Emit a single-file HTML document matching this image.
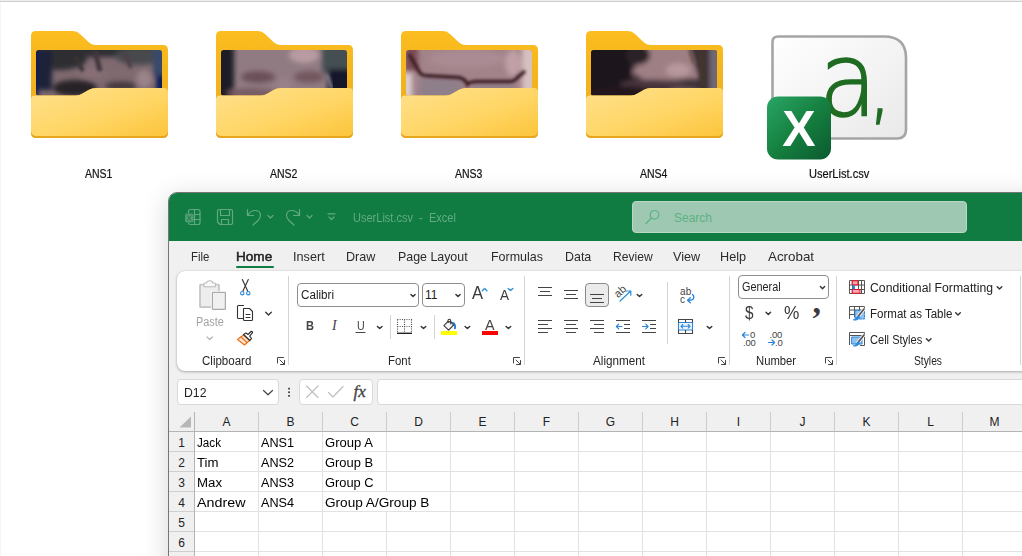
<!DOCTYPE html>
<html lang="en"><head><meta charset="utf-8"><title>UserList.csv - Excel</title>
<style>
html,body{margin:0;padding:0}
body{width:1022px;height:556px;overflow:hidden;position:relative;background:#fff;font-family:"Liberation Sans",sans-serif;color:#1b1b1b}
.a{position:absolute}
.t{position:absolute;white-space:nowrap;line-height:1;transform-origin:0 50%}
svg{position:absolute;overflow:visible}
.lbl{font-size:12px;color:#111;-webkit-text-stroke:.2px #111}
.tab{font-size:13px;color:#2b2b2b}
.grp{font-size:12px;color:#262626}
.cell{font-size:12.5px;color:#000}
.hd{font-size:12px;color:#222}
.sep{position:absolute;width:1px;background:#d4d4d4}
.box{position:absolute;box-sizing:border-box;border:1px solid #8f8f8f;border-radius:4px;background:#fff}
.fbox{position:absolute;box-sizing:border-box;border:1px solid #d9d9d9;border-radius:4px;background:#fff}
</style></head><body>
<!-- desktop frame lines -->
<div class="a" style="left:0;top:0;width:1022px;height:1px;background:#ededed"></div>
<div class="a" style="left:0;top:1px;width:1022px;height:1px;background:#cfcfcf"></div>
<div class="a" style="left:0;top:2px;width:1px;height:554px;background:#f6f6f6"></div>

<!--FOLDERS-->
<svg width="0" height="0" style="position:absolute">
<defs>
<linearGradient id="gb" x1="0" y1="0" x2="0" y2="1"><stop offset="0" stop-color="#fbbd1f"/><stop offset="1" stop-color="#eaa91a"/></linearGradient>
<linearGradient id="gf" x1="0" y1="0" x2="1" y2="1"><stop offset="0" stop-color="#ffe08c"/><stop offset=".55" stop-color="#ffd666"/><stop offset="1" stop-color="#fcc53c"/></linearGradient>
<filter id="bl" x="-20%" y="-20%" width="140%" height="140%"><feGaussianBlur stdDeviation="2.8"/></filter>
<filter id="bl2" x="-20%" y="-20%" width="140%" height="140%"><feGaussianBlur stdDeviation="1.6"/></filter>
<clipPath id="pc"><rect x="5" y="19" width="126" height="46" rx="3"/></clipPath>
<path id="fback" d="M0 5Q0 0 5 0H42Q46 0 49 3L58 11.500Q61 14 65 14H132Q137 14 137 19V102Q137 107 132 107H5Q0 107 0 102Z"/>
<path id="ffront" d="M0 68.500Q0 64.500 4 64.500H45Q48.500 64.500 51.500 62.500L58 58.800Q61 57 65 57H133Q137 57 137 61V101Q137 107 131 107H6Q0 107 0 101Z"/>
<path id="ffront2" d="M0 68.500Q0 64.500 4 64.500H45Q48.500 64.500 51.500 62.500L58 58.800Q61 57 65 57H133Q137 57 137 61V99Q137 105 131 105H6Q0 105 0 99Z"/>
</defs></svg>

<!-- folder 1 -->
<svg class="a" style="left:31px;top:31px" width="137" height="107" viewBox="0 0 137 107">
<use href="#fback" fill="url(#gb)"/>
<g clip-path="url(#pc)"><rect x="5" y="19" width="126" height="46" fill="#7f6a70"/>
<g filter="url(#bl)">
<rect x="0" y="8" width="140" height="18" fill="#2f2f34"/>
<ellipse cx="28" cy="28" rx="28" ry="11" fill="#2e2e33"/>
<ellipse cx="108" cy="25" rx="24" ry="9" fill="#47494d"/>
<rect x="3" y="19" width="18" height="40" fill="#1d2138"/>
<rect x="-4" y="14" width="11" height="60" fill="#0b1c55"/>
<rect x="122" y="12" width="16" height="34" fill="#37486a"/>
<rect x="125" y="44" width="14" height="28" fill="#0c1d58"/>
<ellipse cx="44" cy="57" rx="22" ry="8" fill="#252226"/>
<ellipse cx="90" cy="55" rx="16" ry="4.500" fill="#43373c"/>
<ellipse cx="113" cy="48" rx="8" ry="9" fill="#9a8389"/>
<ellipse cx="62" cy="42" rx="12" ry="5" fill="#877076"/>
</g>
<g filter="url(#bl2)"><path d="M64 20L69 40" stroke="#42343a" stroke-width="5" fill="none"/><path d="M94 22L100 37" stroke="#4d3f45" stroke-width="4" fill="none"/><path d="M44 26L52 40" stroke="#3a3035" stroke-width="4" fill="none"/></g>
</g>
<use href="#ffront" fill="#e7a61b"/><use href="#ffront2" fill="url(#gf)"/>
</svg>
<span class="t lbl" style="left:85px;top:168px;transform:scaleX(.875)">ANS1</span>

<!-- folder 2 -->
<svg class="a" style="left:216px;top:31px" width="137" height="107" viewBox="0 0 137 107">
<use href="#fback" fill="url(#gb)"/>
<g clip-path="url(#pc)"><rect x="5" y="19" width="126" height="46" fill="#917b83"/>
<g filter="url(#bl)">
<rect x="-4" y="10" width="22" height="64" fill="#1f1f28"/>
<rect x="106" y="10" width="36" height="32" fill="#454f53"/>
<rect x="112" y="38" width="30" height="36" fill="#12172a"/>
<ellipse cx="88" cy="24" rx="15" ry="8" fill="#b89ca2"/>
<ellipse cx="42" cy="46" rx="17" ry="6" fill="#6c5058"/>
<ellipse cx="93" cy="46" rx="15" ry="6" fill="#73565e"/>
<ellipse cx="35" cy="62" rx="24" ry="5" fill="#775c64"/>
<ellipse cx="68" cy="56" rx="7" ry="9" fill="#9a8188"/>
</g>
<g filter="url(#bl2)"><path d="M111 44L116 58" stroke="#808088" stroke-width="3" fill="none"/></g>
</g>
<use href="#ffront" fill="#e7a61b"/><use href="#ffront2" fill="url(#gf)"/>
</svg>
<span class="t lbl" style="left:270px;top:168px;transform:scaleX(.875)">ANS2</span>

<!-- folder 3 -->
<svg class="a" style="left:401px;top:31px" width="137" height="107" viewBox="0 0 137 107">
<use href="#fback" fill="url(#gb)"/>
<g clip-path="url(#pc)"><rect x="5" y="19" width="126" height="46" fill="#a3838a"/>
<g filter="url(#bl)">
<rect x="-4" y="42" width="15" height="34" fill="#dccfcf"/>
<rect x="4" y="12" width="13" height="28" fill="#7a4c54"/>
<rect x="121" y="10" width="20" height="64" fill="#d6c0c0"/>
<ellipse cx="112" cy="32" rx="8" ry="13" fill="#c0a0a6"/>
<path d="M20 45L62 48L64 70H16Z" fill="#8f7f8a"/>
<path d="M72 52L114 52L116 70H72Z" fill="#927f8a"/>
<ellipse cx="66" cy="28" rx="38" ry="9" fill="#ab8b93"/>
</g>
<g filter="url(#bl2)" fill="none" stroke="#3a1a24" stroke-width="3.400">
<path d="M8 23L19 42Q21 44.500 27 44.800L58 46.500Q64 47.500 66.500 53.500Q69 50.500 76 50.500L110 50.500Q114 50 117 46L124 40"/>
</g>
</g>
<use href="#ffront" fill="#e7a61b"/><use href="#ffront2" fill="url(#gf)"/>
</svg>
<span class="t lbl" style="left:455px;top:168px;transform:scaleX(.875)">ANS3</span>

<!-- folder 4 -->
<svg class="a" style="left:586px;top:31px" width="137" height="107" viewBox="0 0 137 107">
<use href="#fback" fill="url(#gb)"/>
<g clip-path="url(#pc)"><rect x="5" y="19" width="126" height="46" fill="#3d3035"/>
<g filter="url(#bl)">
<rect x="-4" y="10" width="50" height="64" fill="#1b191e"/>
<path d="M62 12L102 12L114 48L60 50L46 42Z" fill="#9e7f84"/>
<ellipse cx="92" cy="39" rx="12" ry="7" fill="#b8989c"/>
<ellipse cx="66" cy="53" rx="32" ry="4.500" fill="#4a353c"/>
<ellipse cx="98" cy="60" rx="16" ry="4" fill="#6e565d"/>
<rect x="123" y="12" width="16" height="60" fill="#6f6975"/>
<ellipse cx="34" cy="63" rx="34" ry="8" fill="#22161b"/>
<ellipse cx="52" cy="24" rx="12" ry="10" fill="#2c2226"/>
</g>
<g filter="url(#bl2)"><path d="M115 20L118 56" stroke="#43352f" stroke-width="6" fill="none"/><path d="M104 19L108 32" stroke="#6a5450" stroke-width="3" fill="none"/></g>
</g>
<use href="#ffront" fill="#e7a61b"/><use href="#ffront2" fill="url(#gf)"/>
</svg>
<span class="t lbl" style="left:640px;top:168px;transform:scaleX(.875)">ANS4</span>
<!--/FOLDERS-->
<!--CSVICON-->
<!-- csv icon -->
<svg class="a" style="left:760px;top:30px" width="160" height="135" viewBox="760 30 160 135">
<defs>
<linearGradient id="gd" x1="0" y1="0" x2="1" y2="1"><stop offset="0" stop-color="#ffffff"/><stop offset="1" stop-color="#e9e9e9"/></linearGradient>
<linearGradient id="gx" x1="0" y1="0" x2="1" y2="1"><stop offset="0" stop-color="#2aa566"/><stop offset=".5" stop-color="#15803f"/><stop offset="1" stop-color="#0b5a30"/></linearGradient>
</defs>
<path d="M778 36.500H884Q906 36.500 906 58V130Q906 138.500 897 138.500H778Q772.500 138.500 772.500 133V42Q772.500 36.500 778 36.500Z" fill="url(#gd)" stroke="#a5a5a5" stroke-width="2.600"/>
<text transform="translate(819,116) scale(.92,1)" font-family="'DejaVu Sans Light','DejaVu Sans','Liberation Sans',sans-serif" font-weight="200" font-size="103" fill="#1f6b22" stroke="#1f6b22" stroke-width="1.500">a</text>
<text transform="translate(868,114) scale(.9,1)" font-family="'DejaVu Sans Light','DejaVu Sans','Liberation Sans',sans-serif" font-weight="200" font-size="84" fill="#1f6b22" stroke="#1f6b22" stroke-width="1.500">,</text>
<rect x="767" y="96.500" width="64" height="63" rx="11" fill="url(#gx)"/>
<text x="799" y="146" text-anchor="middle" font-family="'Liberation Sans',sans-serif" font-weight="700" font-size="50" fill="#fff">X</text>
</svg>
<span class="t lbl" style="left:809px;top:168px;transform:scaleX(.922)">UserList.csv</span>
<!--/CSVICON-->
<!--WINDOW-->
<div class="a" id="win" style="left:168px;top:192px;width:900px;height:400px;border:1px solid #767676;border-radius:9px 0 0 0;background:#f0f0f0;box-shadow:0 5px 26px rgba(0,0,0,.17);overflow:hidden"></div>
<!-- everything below in page coordinates, clipped to window -->
<div class="a" id="wc" style="left:169px;top:193px;width:853px;height:363px;overflow:hidden;border-radius:8px 0 0 0">
<div class="a" id="o" style="left:-169px;top:-193px;width:1022px;height:556px">
<div class="a" style="left:169px;top:193px;width:853px;height:48px;background:#107c41"></div>
<!--TITLE-->
<!-- title bar icons -->
<svg class="a" style="left:184px;top:208px" width="160" height="18" viewBox="184 208 160 18" fill="none" stroke="#62a982" stroke-width="1.200" stroke-linecap="round" stroke-linejoin="round">
<!-- excel doc icon -->
<path d="M188.500 213V211.500Q188.500 209.500 190.500 209.500H198Q200 209.500 200 211.500V222.500Q200 224.500 198 224.500H190.500Q188.500 224.500 188.500 223"/>
<path d="M194.500 209.500V224.500M194.500 214.500H200M191 219.500H200"/>
<rect x="185" y="213.500" width="8.500" height="9" rx="1.800" fill="#4f9c74" stroke="none"/>
<path d="M187.500 215.800L191 220.400M191 215.800L187.500 220.400" stroke="#1d7d49" stroke-width="1"/>
<!-- save -->
<path d="M217.500 211Q217.500 209.500 219 209.500H231Q232.500 209.500 232.500 211V223Q232.500 224.500 231 224.500H220L217.500 222Z"/>
<path d="M220.500 209.500V215.500H229.500V209.500M221.500 224.500V219.500H228.500V224.500"/>
<!-- undo -->
<path d="M247.500 209.500V215.500H253.500" />
<path d="M247.800 215.200Q250.500 210.500 255 210.500Q260.500 210.500 260.500 215.500Q260.500 218 258 220.500L253 225"/>
<path d="M268 215.500L270.500 218L273 215.500" stroke-width="1.200"/>
<!-- redo -->
<path d="M299.500 209.500V215.500H293.500" />
<path d="M299.200 215.200Q296.500 210.500 292 210.500Q286.500 210.500 286.500 215.500Q286.500 218 289 220.500L294 225"/>
<path d="M307 215.500L309.500 218L312 215.500" stroke-width="1.200"/>
<!-- customize -->
<path d="M328 213.800H335M329 217L331.500 219.500L334 217" stroke-width="1.200"/>
</svg>
<span class="t" style="left:352.500px;top:211.800px;font-size:12px;color:#62ab84;transform:scaleX(.918)">UserList.csv&nbsp; - &nbsp;Excel</span>
<!-- search -->
<div class="a" style="left:632px;top:201px;width:335px;height:32px;box-sizing:border-box;border:1px solid #b9d8c7;border-radius:4px;background:#9fc8b2"></div>
<svg class="a" style="left:645px;top:209px" width="16" height="16" viewBox="0 0 16 16" fill="none" stroke="#5db284" stroke-width="1.200" stroke-linecap="round"><circle cx="9.500" cy="5.800" r="4.300"/><path d="M6.400 9L1 14.500"/></svg>
<span class="t" style="left:674px;top:211.800px;font-size:12px;color:#5db284">Search</span>
<!--/TITLE-->
<!--TABS-->
<span class="t tab" style="left:191px;top:250px;transform:scaleX(0.875)">File</span>
<span class="t tab" style="left:236.200px;top:250px;color:#222;-webkit-text-stroke:.5px #222;transform:scaleX(1.045)">Home</span>
<div class="a" style="left:236px;top:265.500px;width:38px;height:2.500px;border-radius:2px;background:#107c41"></div>
<span class="t tab" style="left:293px;top:250px;transform:scaleX(0.975)">Insert</span>
<span class="t tab" style="left:346px;top:250px;transform:scaleX(0.97)">Draw</span>
<span class="t tab" style="left:398px;top:250px;transform:scaleX(0.953)">Page Layout</span>
<span class="t tab" style="left:491px;top:250px;transform:scaleX(0.96)">Formulas</span>
<span class="t tab" style="left:565px;top:250px;transform:scaleX(0.957)">Data</span>
<span class="t tab" style="left:613px;top:250px;transform:scaleX(0.93)">Review</span>
<span class="t tab" style="left:673px;top:250px;transform:scaleX(0.97)">View</span>
<span class="t tab" style="left:720px;top:250px;transform:scaleX(0.975)">Help</span>
<span class="t tab" style="left:768px;top:250px;transform:scaleX(1.027)">Acrobat</span>
<!--/TABS-->
<!--RIBBON-->
<div class="a" style="left:177px;top:271px;width:900px;height:100px;background:#fff;border-radius:8px;box-shadow:0 1px 3px rgba(0,0,0,.28),0 0 1px rgba(0,0,0,.2)"></div>
<!-- group separators -->
<div class="sep" style="left:288px;top:276px;height:89px"></div>
<div class="sep" style="left:524px;top:276px;height:89px"></div>
<div class="sep" style="left:729px;top:276px;height:89px"></div>
<div class="sep" style="left:836px;top:276px;height:89px"></div>
<div class="sep" style="left:1020px;top:276px;height:89px"></div>
<div class="sep" style="left:390px;top:315px;height:24px"></div>
<div class="sep" style="left:434px;top:315px;height:24px"></div>
<div class="sep" style="left:667px;top:282px;height:62px"></div>
<!-- combo boxes -->
<div class="box" style="left:297px;top:283px;width:122px;height:24px"></div>
<div class="box" style="left:422px;top:283px;width:43px;height:24px"></div>
<div class="box" style="left:738px;top:275px;width:91px;height:24px"></div>
<div class="box" style="left:585px;top:283px;width:24px;height:24px;background:#ebebeb;border-color:#8a8a8a"></div>
<!-- ribbon texts -->
<span class="t grp" style="left:196px;top:316px;color:#a3a3a3;transform:scaleX(.91)">Paste</span>
<span class="t grp" style="left:202px;top:355px;transform:scaleX(.96)">Clipboard</span>
<span class="t grp" style="left:388px;top:355px;transform:scaleX(.95)">Font</span>
<span class="t grp" style="left:593px;top:355px;transform:scaleX(.976)">Alignment</span>
<span class="t grp" style="left:756px;top:355px;transform:scaleX(.94)">Number</span>
<span class="t grp" style="left:914px;top:355px;transform:scaleX(.857)">Styles</span>
<span class="t grp" style="left:301px;top:289px;color:#222;transform:scaleX(.97)">Calibri</span>
<span class="t grp" style="left:425px;top:289px;color:#222">11</span>
<span class="t grp" style="left:742px;top:281px;color:#222;transform:scaleX(.905)">General</span>
<span class="t grp" style="left:869.500px;top:282px;color:#222;transform:scaleX(1.019)">Conditional Formatting</span>
<span class="t grp" style="left:869.500px;top:308px;color:#222;transform:scaleX(.961)">Format as Table</span>
<span class="t grp" style="left:869.500px;top:334px;color:#222;transform:scaleX(.922)">Cell Styles</span>
<span class="t" style="left:305.500px;top:319px;font-size:13px;font-weight:700;color:#444;transform:scaleX(.85)">B</span>
<span class="t" style="left:332px;top:318.500px;font-size:14px;font-style:italic;color:#444;font-family:'Liberation Serif',serif">I</span>
<span class="t" style="left:356.500px;top:319px;font-size:13px;color:#444;transform:scaleX(.82)">U</span>
<span class="t" style="left:472px;top:284px;font-size:18px;color:#3b3b3b;transform:scaleX(.92)">A</span>
<span class="t" style="left:499.500px;top:288px;font-size:14px;color:#3b3b3b;transform:scaleX(.97)">A</span>
<span class="t" style="left:485.300px;top:316.600px;font-size:15.500px;color:#444;transform:scaleX(.93)">A</span>
<span class="t" style="left:745px;top:304px;font-size:18px;color:#3b3b3b;transform:scaleX(.85)">$</span>
<span class="t" style="left:783.500px;top:304px;font-size:18px;color:#3b3b3b;transform:scaleX(.96)">%</span>
<span class="t" style="left:812.500px;top:284.500px;font-size:34px;font-weight:700;color:#3b3b3b;font-family:'Liberation Serif',serif">,</span>
<!--ICONS-->
<svg class="a" style="left:177px;top:271px" width="845" height="100" viewBox="177 271 845 100" fill="none" stroke-linecap="round" stroke-linejoin="round">
<!-- paste (disabled) -->
<rect x="200" y="284.500" width="19" height="22.700" rx="1" fill="#ededed" stroke="#c4c4c4" stroke-width="1.700"/>
<path d="M204 286.700V284Q204 283 205 283H206.600Q206.800 280.700 209.700 280.700Q212.600 280.700 212.800 283H214.400Q215.400 283 215.400 284V286.700Z" fill="#fafafa" stroke="#bcbcbc" stroke-width="1.100"/>
<rect x="212.400" y="292.400" width="13" height="17" rx=".6" fill="#f0f0f0" stroke="#fff" stroke-width="3"/>
<rect x="212.400" y="292.400" width="13" height="17" rx=".6" fill="#f0f0f0" stroke="#a9a9a9" stroke-width="1.200"/>
<path d="M207 337L209.700 339.500L212.400 337" stroke="#b3b3b3" stroke-width="1.200"/>
<!-- cut -->
<g stroke="#333" stroke-width="1.100"><path d="M242.300 279.500L247.800 291.300M248.300 279.500L242.800 291.300"/></g>
<g stroke="#2b86d9" stroke-width="1.100"><circle cx="242.300" cy="293.200" r="1.700"/><circle cx="248.300" cy="293.200" r="1.700"/></g>
<!-- copy -->
<g stroke="#333" stroke-width="1.100"><path d="M243 318.500H238.500Q237.500 318.500 237.500 317.500V306.500Q237.500 305.500 238.500 305.500H243.500"/>
<path d="M243.500 308.500H249.500L252.500 311.500V319.500Q252.500 320.500 251.500 320.500H244.500Q243.500 320.500 243.500 319.500Z"/>
<path d="M246 314.500H250M246 317.500H250" stroke-width="1"/></g>
<path d="M265.700 312.300L268.500 315L271.300 312.300" stroke="#333" stroke-width="1.300"/>
<!-- format painter -->
<g stroke="#e8731a" stroke-width="1.200"><path d="M243.500 335L237.500 339.500L244.500 345L249.500 340.500Z" fill="#fde3cf"/><path d="M241 337L247 342.500" /></g>
<g stroke="#333" stroke-width="1.200"><path d="M243.500 334.500L250 340.500L251.500 338.500L249.700 336.200L252.500 332.700Q252.800 331.200 251.300 331.300L248 334.500L246 333Z" fill="#fff"/></g>
<!-- launchers -->
<g stroke="#444" stroke-width="1"><path id="ln" d="M277.500 363V357.500H283.500M280 360L284.300 364.300M284.500 360.500V364.500H280.500"/>
<use href="#ln" x="236"/><use href="#ln" x="441"/><use href="#ln" x="548"/></g>
<!-- chevrons small -->
<g stroke="#333" stroke-width="1.400">
<path d="M410.9 294.4L413.0 296.5L415.1 294.4"/><path d="M455.9 294.4L458.0 296.5L460.1 294.4"/><path d="M820.4 286.6L822.5 288.7L824.6 286.6"/>
<path d="M377.4 326.4L379.7 328.6L382.0 326.4"/><path d="M421.2 326.4L423.5 328.6L425.8 326.4"/><path d="M465.1 326.4L467.4 328.6L469.7 326.4"/><path d="M506.1 326.4L508.4 328.6L510.7 326.4"/>
<path d="M637.2 294.4L639.5 296.6L641.8 294.4"/><path d="M707.2 326.4L709.5 328.6L711.8 326.4"/><path d="M766.0 312.2L768.3 314.4L770.6 312.2"/>
<path d="M997.2 286.7L999.5 288.9L1001.8 286.7"/><path d="M955.7 312.7L958.0 314.9L960.3 312.7"/><path d="M926.4 338.7L928.7 340.9L931.0 338.7"/>
</g>
<!-- grow/shrink carets -->
<g stroke="#2b93e0" stroke-width="1.400"><path d="M482.300 290.700L484.600 288.500L486.900 290.700"/><path d="M508.200 288.400L510.500 290.600L512.800 288.400"/></g>
<!-- underline for U -->
<path d="M356 332.500H365" stroke="#444" stroke-width="1.100"/>
<!-- borders -->
<g stroke="#444" stroke-width="1.100" stroke-dasharray=".9 1.350" stroke-linecap="butt"><path d="M397.500 319.500H412M397.500 326.500H412M397.500 319.500V333M404.500 319.500V333M411.500 319.500V333"/></g>
<path d="M397 333.300H412" stroke="#222" stroke-width="1.400" stroke-linecap="butt"/>
<!-- fill colour -->
<rect x="441" y="331" width="16" height="4" fill="#ffff00" stroke="none"/>
<g stroke="#3a3a3a" stroke-width="1.100"><path d="M447.700 321.600L443.900 325.600L448.600 330.100L453.700 325L450.800 321.900Z" fill="#f4f4f4"/><path d="M448 322.500V320.400Q448 319.300 449.300 319.300Q450.700 319.300 450.700 320.600V324"/></g>
<path d="M452.800 322.800Q455.600 323.600 455 328.300" stroke="#1f74c9" stroke-width="1.800"/>
<!-- font colour bar -->
<rect x="482" y="331" width="16" height="4" fill="#ff0000" stroke="none"/>
<!-- alignment -->
<g stroke="#444" stroke-width="1.100" stroke-linecap="butt">
<path d="M538 287.500H552M540 291.500H550M538 295.500H552"/>
<path d="M564 290.500H578M566 294.500H576M564 298.500H578"/>
<path d="M590 294.500H604M592 298.500H602M590 302.500H604"/>
<path d="M538 320.500H552M538 324.500H548M538 328.500H552M538 332.500H548"/>
<path d="M564 320.500H578M566 324.500H576M564 328.500H578M566 332.500H576"/>
<path d="M590 320.500H604M594 324.500H604M590 328.500H604M594 332.500H604"/>
<path d="M616 320.500H630M624 324.500H630M624 328.500H630M616 332.500H630"/>
<path d="M642 320.500H656M650 324.500H656M650 328.500H656M642 332.500H656"/>
</g>
<g stroke="#2b86d9" stroke-width="1.200"><path d="M616.500 326.500H622M618.700 324.200L616.400 326.500L618.700 328.800"/><path d="M642.500 326.500H648M645.800 324.200L648.100 326.500L645.800 328.800"/></g>
<!-- orientation -->
<path d="M620 301L630.500 291.300M626.500 291H630.800V295.300" stroke="#2b93e0" stroke-width="1.200"/>
<!-- wrap text arrow -->
<path d="M692.500 294.500Q694.500 296 693.500 298.500Q692.500 300.500 688 300.300M690.300 297.800L687.500 300.300L690.300 302.800" stroke="#2b86d9" stroke-width="1.300"/>
<!-- merge -->
<rect x="678.500" y="322.500" width="14" height="7.500" fill="#eef6fd" stroke="#2b86d9" stroke-width="1.100"/>
<g stroke="#444" stroke-width="1.100" stroke-linecap="butt"><path d="M678.500 322.500V319.500H692.500V322.500M685.500 319.500V322.500M678.500 330V333.500H692.500V330M685.500 330V333.500"/></g>
<path d="M681 326.300H690M682.800 324.500L681 326.300L682.800 328.100M688.200 324.500L690 326.300L688.200 328.100" stroke="#2b86d9" stroke-width="1.100"/>
<!-- decimals arrows -->
<g stroke="#2b86d9" stroke-width="1.200"><path d="M742.500 335H748.500M745 332.500L742.400 335L745 337.500"/><path d="M768.500 342.500H774.500M772 340L774.600 342.500L772 345"/></g>
<!-- conditional formatting -->
<g stroke="#555" stroke-width="1" stroke-linecap="butt"><rect x="849.500" y="280.500" width="15" height="13"/><path d="M852.500 280.500V293.500M858.500 280.500V293.500M861.500 280.500V293.500M849.500 285H864.500M849.500 289.500H864.500"/></g>
<rect x="852.500" y="280.800" width="5.500" height="4" fill="#f6a6ae" stroke="#e81123" stroke-width="1"/>
<rect x="852.500" y="289.500" width="7.500" height="3.800" fill="#f6a6ae" stroke="#e81123" stroke-width="1"/>
<rect x="852.300" y="285.300" width="2.700" height="4" fill="#2b86d9" stroke="none"/>
<!-- format as table -->
<g stroke="#555" stroke-width="1" stroke-linecap="butt"><path d="M849.500 319V306.500H864.500V309M849.500 310H864.500M854.500 306.500V317M859.500 306.500V310M849.500 314.500H856"/></g>
<path d="M855 310.500H864.500V319H855Z" fill="#8ec2f2" stroke="none"/>
<path d="M855 310.500H864.500V319H855Z" fill="none" stroke="#2b86d9" stroke-width="1" stroke-dasharray="2 1.500"/>
<path d="M863.800 309.300L858 316.500" stroke="#fff" stroke-width="3.400"/><path d="M864 309L858 316.500" stroke="#555" stroke-width="1.800"/>
<path d="M858.500 316Q856 316.500 855.500 319Q854.500 320 853 319.700Q857.500 321.500 859.800 317.300Z" fill="#2b86d9" stroke="#2b86d9" stroke-width=".6"/>
<!-- cell styles -->
<g stroke="#555" stroke-width="1" stroke-linecap="butt"><path d="M849.500 345V332.500H864.500V345.500H860M849.500 335.500H864.500"/></g>
<path d="M852 337H862V344H852Z" fill="#8ec2f2" stroke="#2b86d9" stroke-width="1"/>
<path d="M863.800 335.300L858 342.500" stroke="#fff" stroke-width="3.400"/><path d="M864 335L858 342.500" stroke="#555" stroke-width="1.800"/>
<path d="M858.500 342Q856 342.500 855.500 345Q854.500 346 853 345.700Q857.500 347.500 859.800 343.300Z" fill="#2b86d9" stroke="#2b86d9" stroke-width=".6"/>
</svg>
<!-- icon texts -->
<span class="t" style="left:613.500px;top:285.500px;font-size:11px;color:#444;transform:rotate(-42deg);transform-origin:50% 50%">ab</span>
<span class="t" style="left:680px;top:287px;font-size:10px;color:#444;letter-spacing:.3px">ab</span>
<span class="t" style="left:680px;top:294.500px;font-size:10px;color:#444">c</span>
<span class="t" style="left:750px;top:329.500px;font-size:9.500px;color:#444">0</span>
<span class="t" style="left:743px;top:337.500px;font-size:9.500px;color:#444;letter-spacing:-.2px">.00</span>
<span class="t" style="left:769.500px;top:329.500px;font-size:9.500px;color:#444;letter-spacing:-.2px">.00</span>
<span class="t" style="left:775px;top:337.500px;font-size:9.500px;color:#444;letter-spacing:-.2px">.0</span>
<!--/ICONS-->
<!--/RIBBON-->
<!--FBAR-->
<div class="fbox" style="left:177px;top:379px;width:102px;height:26px"></div>
<div class="fbox" style="left:299px;top:379px;width:74px;height:26px"></div>
<div class="fbox" style="left:377px;top:379px;width:700px;height:26px"></div>
<span class="t" style="left:184.300px;top:386.500px;font-size:12px;color:#222;transform:scaleX(1.02)">D12</span>
<svg class="a" style="left:177px;top:380px" width="200" height="24" viewBox="177 380 200 24" fill="none" stroke-linecap="round" stroke-linejoin="round">
<path d="M263.500 390.500L268 394.800L272.500 390.500" stroke="#444" stroke-width="1.200"/>
<g fill="#333"><rect x="288.200" y="387.800" width="1.700" height="1.700"/><rect x="288.200" y="391.400" width="1.700" height="1.700"/><rect x="288.200" y="395" width="1.700" height="1.700"/></g>
<path d="M306.500 386L318 397.500M318 386L306.500 397.500" stroke="#bdbdbd" stroke-width="1.100"/>
<path d="M328.500 392.500L333 397L343 386.500" stroke="#bdbdbd" stroke-width="1.100"/>
</svg>
<span class="t" style="left:353.500px;top:382.500px;font-size:17px;font-style:italic;-webkit-text-stroke:.35px #444;color:#444;font-family:'Liberation Serif',serif;letter-spacing:0">fx</span>
<!--/FBAR-->
<!--GRID-->
<div class="a" style="left:169px;top:432px;width:853px;height:124px;background:#fff"></div>
<div class="a" style="left:169px;top:412px;width:853px;height:19px;background:#f0f0f0"></div>
<div class="a" style="left:169px;top:431px;width:26px;height:125px;background:#f0f0f0"></div>
<div class="a" style="left:195px;top:451px;width:827px;height:1px;background:#e2e2e2"></div>
<div class="a" style="left:169px;top:451px;width:25px;height:1px;background:#cfcfcf"></div>
<div class="a" style="left:195px;top:471px;width:827px;height:1px;background:#e2e2e2"></div>
<div class="a" style="left:169px;top:471px;width:25px;height:1px;background:#cfcfcf"></div>
<div class="a" style="left:195px;top:491px;width:827px;height:1px;background:#e2e2e2"></div>
<div class="a" style="left:169px;top:491px;width:25px;height:1px;background:#cfcfcf"></div>
<div class="a" style="left:195px;top:511px;width:827px;height:1px;background:#e2e2e2"></div>
<div class="a" style="left:169px;top:511px;width:25px;height:1px;background:#cfcfcf"></div>
<div class="a" style="left:195px;top:531px;width:827px;height:1px;background:#e2e2e2"></div>
<div class="a" style="left:169px;top:531px;width:25px;height:1px;background:#cfcfcf"></div>
<div class="a" style="left:195px;top:551px;width:827px;height:1px;background:#e2e2e2"></div>
<div class="a" style="left:169px;top:551px;width:25px;height:1px;background:#cfcfcf"></div>
<div class="a" style="left:258px;top:432px;width:1px;height:124px;background:#e2e2e2"></div>
<div class="a" style="left:258px;top:412px;width:1px;height:19px;background:#cdcdcd"></div>
<div class="a" style="left:322px;top:432px;width:1px;height:124px;background:#e2e2e2"></div>
<div class="a" style="left:322px;top:412px;width:1px;height:19px;background:#cdcdcd"></div>
<div class="a" style="left:386px;top:432px;width:1px;height:124px;background:#e2e2e2"></div>
<div class="a" style="left:386px;top:412px;width:1px;height:19px;background:#cdcdcd"></div>
<div class="a" style="left:450px;top:432px;width:1px;height:124px;background:#e2e2e2"></div>
<div class="a" style="left:450px;top:412px;width:1px;height:19px;background:#cdcdcd"></div>
<div class="a" style="left:514px;top:432px;width:1px;height:124px;background:#e2e2e2"></div>
<div class="a" style="left:514px;top:412px;width:1px;height:19px;background:#cdcdcd"></div>
<div class="a" style="left:578px;top:432px;width:1px;height:124px;background:#e2e2e2"></div>
<div class="a" style="left:578px;top:412px;width:1px;height:19px;background:#cdcdcd"></div>
<div class="a" style="left:642px;top:432px;width:1px;height:124px;background:#e2e2e2"></div>
<div class="a" style="left:642px;top:412px;width:1px;height:19px;background:#cdcdcd"></div>
<div class="a" style="left:706px;top:432px;width:1px;height:124px;background:#e2e2e2"></div>
<div class="a" style="left:706px;top:412px;width:1px;height:19px;background:#cdcdcd"></div>
<div class="a" style="left:770px;top:432px;width:1px;height:124px;background:#e2e2e2"></div>
<div class="a" style="left:770px;top:412px;width:1px;height:19px;background:#cdcdcd"></div>
<div class="a" style="left:834px;top:432px;width:1px;height:124px;background:#e2e2e2"></div>
<div class="a" style="left:834px;top:412px;width:1px;height:19px;background:#cdcdcd"></div>
<div class="a" style="left:898px;top:432px;width:1px;height:124px;background:#e2e2e2"></div>
<div class="a" style="left:898px;top:412px;width:1px;height:19px;background:#cdcdcd"></div>
<div class="a" style="left:962px;top:432px;width:1px;height:124px;background:#e2e2e2"></div>
<div class="a" style="left:962px;top:412px;width:1px;height:19px;background:#cdcdcd"></div>
<div class="a" style="left:1026px;top:432px;width:1px;height:124px;background:#e2e2e2"></div>
<div class="a" style="left:1026px;top:412px;width:1px;height:19px;background:#cdcdcd"></div>
<div class="a" style="left:169px;top:431px;width:853px;height:1px;background:#b4b4b4"></div>
<div class="a" style="left:194px;top:412px;width:1px;height:144px;background:#b4b4b4"></div>
<svg class="a" style="left:179px;top:416px" width="13" height="12" viewBox="0 0 13 12"><path d="M12 .5V11.500H.5Z" fill="#b7b7b7"/></svg>
<div class="a" style="left:386px;top:492px;width:1px;height:19px;background:#fff"></div>
<span class="t hd" style="left:216.5px;top:415.500px;width:20px;text-align:center">A</span>
<span class="t hd" style="left:280.5px;top:415.500px;width:20px;text-align:center">B</span>
<span class="t hd" style="left:344.5px;top:415.500px;width:20px;text-align:center">C</span>
<span class="t hd" style="left:408.5px;top:415.500px;width:20px;text-align:center">D</span>
<span class="t hd" style="left:472.5px;top:415.500px;width:20px;text-align:center">E</span>
<span class="t hd" style="left:536.5px;top:415.500px;width:20px;text-align:center">F</span>
<span class="t hd" style="left:600.5px;top:415.500px;width:20px;text-align:center">G</span>
<span class="t hd" style="left:664.5px;top:415.500px;width:20px;text-align:center">H</span>
<span class="t hd" style="left:728.5px;top:415.500px;width:20px;text-align:center">I</span>
<span class="t hd" style="left:792.5px;top:415.500px;width:20px;text-align:center">J</span>
<span class="t hd" style="left:856.5px;top:415.500px;width:20px;text-align:center">K</span>
<span class="t hd" style="left:920.5px;top:415.500px;width:20px;text-align:center">L</span>
<span class="t hd" style="left:984.5px;top:415.500px;width:20px;text-align:center">M</span>
<span class="t hd" style="left:171.500px;top:436.5px;width:20px;text-align:center">1</span>
<span class="t hd" style="left:171.500px;top:456.5px;width:20px;text-align:center">2</span>
<span class="t hd" style="left:171.500px;top:476.5px;width:20px;text-align:center">3</span>
<span class="t hd" style="left:171.500px;top:496.5px;width:20px;text-align:center">4</span>
<span class="t hd" style="left:171.500px;top:516.5px;width:20px;text-align:center">5</span>
<span class="t hd" style="left:171.500px;top:536.5px;width:20px;text-align:center">6</span>
<span class="t cell" style="left:196.5px;top:437px;transform:scaleX(0.934)">Jack</span>
<span class="t cell" style="left:260.5px;top:437px;transform:scaleX(1.012)">ANS1</span>
<span class="t cell" style="left:324.5px;top:437px;transform:scaleX(1.045)">Group A</span>
<span class="t cell" style="left:196.5px;top:457px;transform:scaleX(1.056)">Tim</span>
<span class="t cell" style="left:260.5px;top:457px;transform:scaleX(1.012)">ANS2</span>
<span class="t cell" style="left:324.5px;top:457px;transform:scaleX(1.035)">Group B</span>
<span class="t cell" style="left:196.5px;top:477px;transform:scaleX(1.059)">Max</span>
<span class="t cell" style="left:260.5px;top:477px;transform:scaleX(1.012)">ANS3</span>
<span class="t cell" style="left:324.5px;top:477px;transform:scaleX(1.03)">Group C</span>
<span class="t cell" style="left:196.5px;top:497px;transform:scaleX(1.144)">Andrew</span>
<span class="t cell" style="left:260.5px;top:497px;transform:scaleX(1.012)">ANS4</span>
<span class="t cell" style="left:324.5px;top:497px;transform:scaleX(1.089)">Group A/Group B</span>
<!--/GRID-->
</div></div>
<!--/WINDOW-->
</body></html>
